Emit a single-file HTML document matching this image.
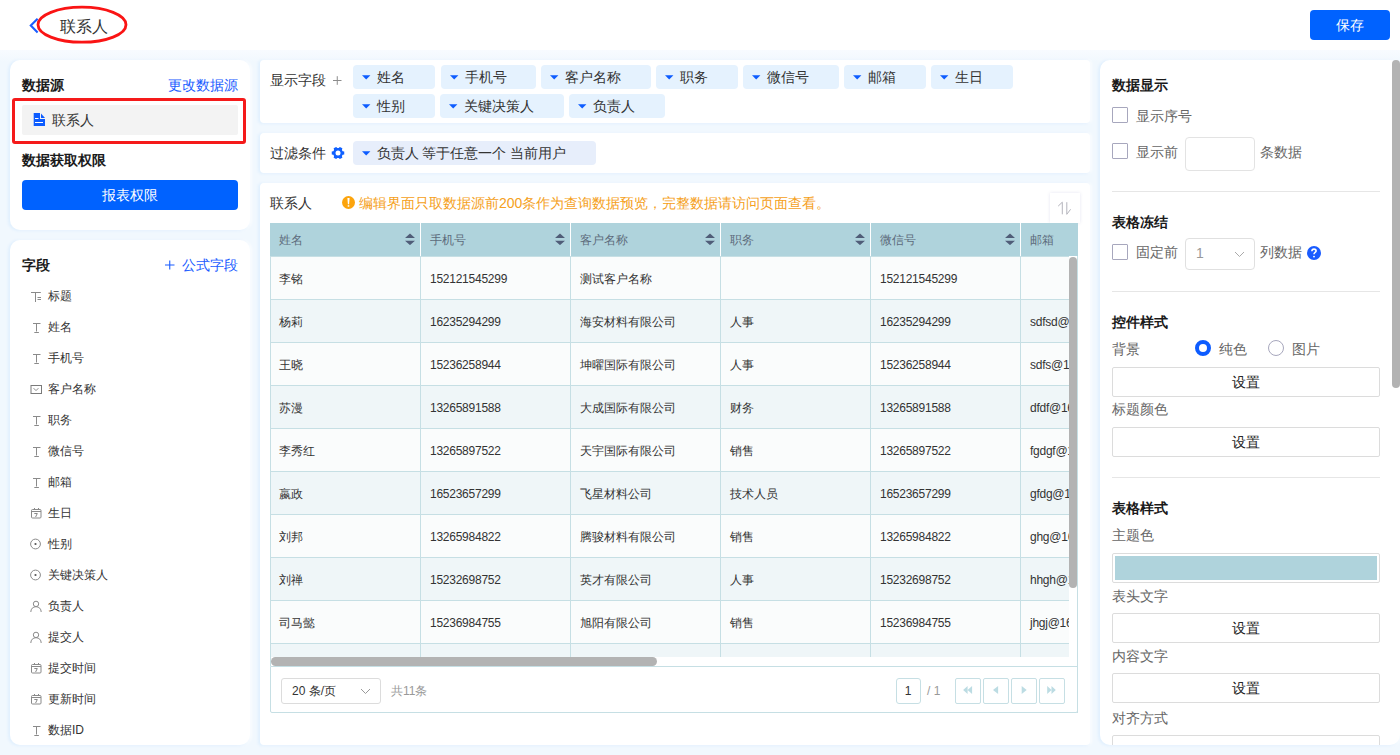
<!DOCTYPE html>
<html><head><meta charset="utf-8">
<style>
*{box-sizing:border-box;margin:0;padding:0}
html,body{width:1400px;height:755px;overflow:hidden}
body{font-family:"Liberation Sans",sans-serif;background:#f1f8fe;position:relative;color:#333;font-size:14px}
.a{position:absolute;white-space:nowrap}
.t14{font-size:14px;line-height:20px;height:20px}
.t12{font-size:12px;line-height:16px;height:16px}
.panel{position:absolute;background:#fff;border-radius:10px;box-shadow:-1.5px 0.5px 3px rgba(0,130,255,.065),2px 0 3px rgba(255,255,255,.7)}
.b{font-weight:bold;color:#1a1a1a}
.blue{color:#1a5cff}
.g6{color:#666}
.btn{position:absolute;background:#0062ff;color:#fff;border-radius:4px;text-align:center}
.chip{position:absolute;height:23.5px;background:#e5f2fe;border-radius:4px}
.chip svg{position:absolute;left:8.5px;top:9.6px}
.chip span{position:absolute;left:23.5px;top:1.5px;font-size:14px;line-height:20px;color:#333}
.fld{position:absolute;left:48px;font-size:12px;line-height:16px;color:#333}
.fic{position:absolute;left:30px}
.tbl{position:absolute;left:270px;top:223px;width:799px;height:434px;overflow:hidden}
.th{position:absolute;top:0;height:33px;background:#afd3dc}
.th span{position:absolute;left:9px;top:9px;font-size:12px;line-height:16px;color:#5d6b7b}
.th svg{position:absolute;right:5px;top:10px}
.tr{position:absolute;left:0;width:900px;height:43px;border-top:1px solid #c6dfe4}
.td{position:absolute;top:0;height:43px;border-left:1px solid #c6dfe4;overflow:hidden}
.td span{position:absolute;left:9px;top:14px;font-size:12px;line-height:16px;color:#333}
.td span.n{letter-spacing:-0.25px}
.sbtn{position:absolute;left:1112px;width:268px;height:30px;border:1px solid #dcdcdc;border-radius:2px;background:#fff;text-align:center;font-size:14px;line-height:28px;color:#222}
.cb{position:absolute;left:1112px;width:16px;height:16px;border:1px solid #a7a7bd;border-radius:1px;background:#fff}
.sep{position:absolute;left:1112px;width:268px;height:1px;background:#e6e6e6}
.pbtn{position:absolute;top:678px;width:25.5px;height:25.5px;border:1px solid #c6dfe4;border-radius:2px;background:#fff}
.pbtn svg{position:absolute;left:6px;top:7px;overflow:visible}
</style></head><body>

<div class="a" style="left:0;top:0;width:1400px;height:50px;background:#fff"></div>
<div class="a" style="left:0;top:50px;width:1400px;height:12px;background:linear-gradient(#f8fbff,#f1f8fe)"></div>
<svg class="a" style="left:28px;top:16px" width="14" height="20" viewBox="0 0 14 20"><path d="M9.6 2.8 L2.8 9.6 L9.6 16.4" fill="none" stroke="#1a5cff" stroke-width="2.1"/></svg>
<div class="a" style="left:60px;top:15px;font-size:16px;line-height:24px;color:#333">联系人</div>
<svg class="a" style="left:34px;top:4px" width="96" height="42" viewBox="0 0 96 42"><ellipse cx="48" cy="20.7" rx="44" ry="17.5" fill="none" stroke="#fa1414" stroke-width="2.8"/></svg>
<div class="btn" style="left:1310px;top:10px;width:80px;height:30px;line-height:30px;font-size:14px">保存</div>
<div class="panel" style="left:10px;top:60px;width:240px;height:170px"></div>
<div class="a t14 b" style="left:22px;top:75px">数据源</div>
<div class="a t14 blue" style="left:168px;top:75px">更改数据源</div>
<div class="a" style="left:22px;top:105px;width:216px;height:30px;background:#f3f3f3;border-radius:2px"></div>
<svg class="a" style="left:33px;top:112px" width="13" height="15" viewBox="0 0 13 15"><path d="M0.7 0.9H7V6.9H12V14.1H0.7Z" fill="#0d5cff"/><path d="M8 1.6L12 6H8Z" fill="#0d5cff"/><path d="M2 6.5H5.5M2 10.5H10" stroke="#fff" stroke-width="1.1"/></svg>
<div class="a t14" style="left:52px;top:110px;color:#333">联系人</div>
<div class="a" style="left:12px;top:98px;width:234px;height:46px;border:3px solid #f51a1a;border-radius:3px"></div>
<div class="a t14 b" style="left:22px;top:150px">数据获取权限</div>
<div class="btn" style="left:22px;top:180px;width:216px;height:30px;line-height:30px;font-size:14px">报表权限</div>
<div class="panel" style="left:10px;top:240px;width:240px;height:505px"></div>
<div class="a t14 b" style="left:22px;top:255px">字段</div>
<svg class="a" style="left:165px;top:260px" width="10" height="10" viewBox="0 0 10 10"><path d="M0 5H9.5M4.75 0.5V9.5" stroke="#1a5cff" stroke-width="1.1"/></svg>
<div class="a t14 blue" style="left:182px;top:255px">公式字段</div>
<div class="fic" style="top:289px"><svg width="12" height="12" viewBox="0 0 12 12"><path d="M1 2.5H10.8M5.5 2.5V12M7.5 7.5H11M7.5 9.5H11" stroke="#8a8a8a" stroke-width="1" fill="none"/></svg></div>
<div class="fld" style="top:287.5px">标题</div>
<div class="fic" style="top:320px"><svg width="12" height="12" viewBox="0 0 12 12"><path d="M3 2.5H10.5M6.5 2.5V10.5M4.3 11.5H8.9" stroke="#8a8a8a" stroke-width="1" fill="none"/></svg></div>
<div class="fld" style="top:318.5px">姓名</div>
<div class="fic" style="top:351px"><svg width="12" height="12" viewBox="0 0 12 12"><path d="M3 2.5H10.5M6.5 2.5V10.5M4.3 11.5H8.9" stroke="#8a8a8a" stroke-width="1" fill="none"/></svg></div>
<div class="fld" style="top:349.5px">手机号</div>
<div class="fic" style="top:382px"><svg width="12" height="12" viewBox="0 0 12 12"><rect x="1" y="2.5" width="10.5" height="8" fill="none" stroke="#7a7a7a"/><path d="M3.6 5.2L6 7.6L8.4 5.2" stroke="#8a8a8a" fill="none"/></svg></div>
<div class="fld" style="top:380.5px">客户名称</div>
<div class="fic" style="top:413px"><svg width="12" height="12" viewBox="0 0 12 12"><path d="M3 2.5H10.5M6.5 2.5V10.5M4.3 11.5H8.9" stroke="#8a8a8a" stroke-width="1" fill="none"/></svg></div>
<div class="fld" style="top:411.5px">职务</div>
<div class="fic" style="top:444px"><svg width="12" height="12" viewBox="0 0 12 12"><path d="M3 2.5H10.5M6.5 2.5V10.5M4.3 11.5H8.9" stroke="#8a8a8a" stroke-width="1" fill="none"/></svg></div>
<div class="fld" style="top:442.5px">微信号</div>
<div class="fic" style="top:475px"><svg width="12" height="12" viewBox="0 0 12 12"><path d="M3 2.5H10.5M6.5 2.5V10.5M4.3 11.5H8.9" stroke="#8a8a8a" stroke-width="1" fill="none"/></svg></div>
<div class="fld" style="top:473.5px">邮箱</div>
<div class="fic" style="top:506px"><svg width="12" height="12" viewBox="0 0 12 12"><rect x="1.5" y="2.5" width="9.5" height="8.5" rx="1" fill="none" stroke="#8a8a8a"/><path d="M1.5 4.5H11M4.5 1V3M8.5 1V3M4.3 6.5H7.3L5.6 10" stroke="#8a8a8a" fill="none"/></svg></div>
<div class="fld" style="top:504.5px">生日</div>
<div class="fic" style="top:537px"><svg width="12" height="12" viewBox="0 0 12 12"><circle cx="5.5" cy="6" r="4.9" fill="none" stroke="#8a8a8a"/><circle cx="5.5" cy="6" r="1.1" fill="#555"/></svg></div>
<div class="fld" style="top:535.5px">性别</div>
<div class="fic" style="top:568px"><svg width="12" height="12" viewBox="0 0 12 12"><circle cx="5.5" cy="6" r="4.9" fill="none" stroke="#8a8a8a"/><circle cx="5.5" cy="6" r="1.1" fill="#555"/></svg></div>
<div class="fld" style="top:566.5px">关键决策人</div>
<div class="fic" style="top:599px"><svg width="12" height="12" viewBox="0 0 12 12"><circle cx="6" cy="3.9" r="2.7" fill="none" stroke="#8a8a8a"/><path d="M0.8 12C0.8 8.8 3 6.7 6 6.7S11.2 8.8 11.2 12" fill="none" stroke="#8a8a8a"/></svg></div>
<div class="fld" style="top:597.5px">负责人</div>
<div class="fic" style="top:630px"><svg width="12" height="12" viewBox="0 0 12 12"><circle cx="6" cy="3.9" r="2.7" fill="none" stroke="#8a8a8a"/><path d="M0.8 12C0.8 8.8 3 6.7 6 6.7S11.2 8.8 11.2 12" fill="none" stroke="#8a8a8a"/></svg></div>
<div class="fld" style="top:628.5px">提交人</div>
<div class="fic" style="top:661px"><svg width="12" height="12" viewBox="0 0 12 12"><rect x="1.5" y="2.5" width="9.5" height="8.5" rx="1" fill="none" stroke="#8a8a8a"/><path d="M1.5 4.5H11M4.5 1V3M8.5 1V3M4.3 6.5H7.3L5.6 10" stroke="#8a8a8a" fill="none"/></svg></div>
<div class="fld" style="top:659.5px">提交时间</div>
<div class="fic" style="top:692px"><svg width="12" height="12" viewBox="0 0 12 12"><rect x="1.5" y="2.5" width="9.5" height="8.5" rx="1" fill="none" stroke="#8a8a8a"/><path d="M1.5 4.5H11M4.5 1V3M8.5 1V3M4.3 6.5H7.3L5.6 10" stroke="#8a8a8a" fill="none"/></svg></div>
<div class="fld" style="top:690.5px">更新时间</div>
<div class="fic" style="top:723px"><svg width="12" height="12" viewBox="0 0 12 12"><path d="M3 2.5H10.5M6.5 2.5V10.5M4.3 11.5H8.9" stroke="#8a8a8a" stroke-width="1" fill="none"/></svg></div>
<div class="fld" style="top:721.5px">数据ID</div>
<div class="panel" style="left:260px;top:60px;width:830px;height:63px;border-radius:4px"></div>
<div class="a t14" style="left:270px;top:70px;color:#333">显示字段</div>
<svg class="a" style="left:333px;top:75.5px" width="9" height="9" viewBox="0 0 9 9"><path d="M0 4.5H8.5M4.25 0.2V8.8" stroke="#8c8c8c" stroke-width="1"/></svg>
<div class="chip" style="left:353px;top:65px;width:82px"><svg width="9" height="6" viewBox="0 0 9 6"><path d="M0 0.2H8.4L4.2 4.6Z" fill="#0d5cff"/></svg><span>姓名</span></div>
<div class="chip" style="left:441px;top:65px;width:95px"><svg width="9" height="6" viewBox="0 0 9 6"><path d="M0 0.2H8.4L4.2 4.6Z" fill="#0d5cff"/></svg><span>手机号</span></div>
<div class="chip" style="left:541px;top:65px;width:110px"><svg width="9" height="6" viewBox="0 0 9 6"><path d="M0 0.2H8.4L4.2 4.6Z" fill="#0d5cff"/></svg><span>客户名称</span></div>
<div class="chip" style="left:656px;top:65px;width:82px"><svg width="9" height="6" viewBox="0 0 9 6"><path d="M0 0.2H8.4L4.2 4.6Z" fill="#0d5cff"/></svg><span>职务</span></div>
<div class="chip" style="left:743px;top:65px;width:96px"><svg width="9" height="6" viewBox="0 0 9 6"><path d="M0 0.2H8.4L4.2 4.6Z" fill="#0d5cff"/></svg><span>微信号</span></div>
<div class="chip" style="left:844px;top:65px;width:82px"><svg width="9" height="6" viewBox="0 0 9 6"><path d="M0 0.2H8.4L4.2 4.6Z" fill="#0d5cff"/></svg><span>邮箱</span></div>
<div class="chip" style="left:931px;top:65px;width:82px"><svg width="9" height="6" viewBox="0 0 9 6"><path d="M0 0.2H8.4L4.2 4.6Z" fill="#0d5cff"/></svg><span>生日</span></div>
<div class="chip" style="left:353px;top:94px;width:82px"><svg width="9" height="6" viewBox="0 0 9 6"><path d="M0 0.2H8.4L4.2 4.6Z" fill="#0d5cff"/></svg><span>性别</span></div>
<div class="chip" style="left:440px;top:94px;width:124px"><svg width="9" height="6" viewBox="0 0 9 6"><path d="M0 0.2H8.4L4.2 4.6Z" fill="#0d5cff"/></svg><span>关键决策人</span></div>
<div class="chip" style="left:569px;top:94px;width:96px"><svg width="9" height="6" viewBox="0 0 9 6"><path d="M0 0.2H8.4L4.2 4.6Z" fill="#0d5cff"/></svg><span>负责人</span></div>
<div class="panel" style="left:260px;top:133px;width:830px;height:40px;border-radius:4px"></div>
<div class="a t14" style="left:270px;top:143px;color:#333">过滤条件</div>
<svg class="a" style="left:330.5px;top:146.2px" width="14" height="14" viewBox="0 0 14 14"><path d="M11.64 5.13 L13.24 5.56 L13.24 8.44 L11.64 8.87 L10.94 10.08 L11.36 11.68 L8.87 13.12 L7.70 11.95 L6.30 11.95 L5.13 13.12 L2.64 11.68 L3.06 10.08 L2.36 8.87 L0.76 8.44 L0.76 5.56 L2.36 5.13 L3.06 3.92 L2.64 2.32 L5.13 0.88 L6.30 2.05 L7.70 2.05 L8.87 0.88 L11.36 2.32 L10.94 3.92Z" fill="#1060ff"/><circle cx="7" cy="7" r="2.5" fill="#fff"/></svg>
<div class="chip" style="left:353px;top:141px;width:243px;background:#e7eefb"><svg width="9" height="6" viewBox="0 0 9 6"><path d="M0 0.2H8.4L4.2 4.6Z" fill="#0d5cff"/></svg><span>负责人 等于任意一个 当前用户</span></div>
<div class="panel" style="left:260px;top:183px;width:830px;height:562px;border-radius:4px"></div>
<div class="a t14" style="left:270px;top:193px;color:#333">联系人</div>
<svg class="a" style="left:342px;top:196px" width="13" height="13" viewBox="0 0 13 13"><circle cx="6.5" cy="6.5" r="6.5" fill="#fca40c"/><path d="M5.4 2H7.6L7.1 8.3H5.9Z" fill="#fff"/><rect x="5.7" y="9.2" width="1.6" height="1.5" fill="#fff"/></svg>
<div class="a t14" style="left:359px;top:193px;color:#f5a020">编辑界面只取数据源前200条作为查询数据预览，完整数据请访问页面查看。</div>
<div class="a" style="left:1050px;top:193px;width:30px;height:30px;background:#fff;box-shadow:0 0 3px rgba(150,150,200,.25)"></div>
<svg class="a" style="left:1057px;top:201px" width="15" height="14" viewBox="0 0 15 14"><path d="M1.2 5.1L5.3 1.2V13.3M9.8 1.2V13.3L13.6 8.3" fill="none" stroke="#b4b4bc" stroke-width="1"/></svg>
<div class="tbl">
<div class="th" style="left:0px;width:150px;"><span>姓名</span><svg width="10" height="12" viewBox="0 0 10 12"><path d="M0 4.9L5 0.4L10 4.9Z M0 7.8L10 7.8L5 12.1Z" fill="#505d78"/></svg></div>
<div class="th" style="left:150px;width:150px;border-left:1px solid #fff"><span>手机号</span><svg width="10" height="12" viewBox="0 0 10 12"><path d="M0 4.9L5 0.4L10 4.9Z M0 7.8L10 7.8L5 12.1Z" fill="#505d78"/></svg></div>
<div class="th" style="left:300px;width:150px;border-left:1px solid #fff"><span>客户名称</span><svg width="10" height="12" viewBox="0 0 10 12"><path d="M0 4.9L5 0.4L10 4.9Z M0 7.8L10 7.8L5 12.1Z" fill="#505d78"/></svg></div>
<div class="th" style="left:450px;width:150px;border-left:1px solid #fff"><span>职务</span><svg width="10" height="12" viewBox="0 0 10 12"><path d="M0 4.9L5 0.4L10 4.9Z M0 7.8L10 7.8L5 12.1Z" fill="#505d78"/></svg></div>
<div class="th" style="left:600px;width:150px;border-left:1px solid #fff"><span>微信号</span><svg width="10" height="12" viewBox="0 0 10 12"><path d="M0 4.9L5 0.4L10 4.9Z M0 7.8L10 7.8L5 12.1Z" fill="#505d78"/></svg></div>
<div class="th" style="left:750px;width:150px;border-left:1px solid #fff"><span>邮箱</span><svg width="10" height="12" viewBox="0 0 10 12"><path d="M0 4.9L5 0.4L10 4.9Z M0 7.8L10 7.8L5 12.1Z" fill="#505d78"/></svg></div>
<div class="tr" style="top:33px;background:#fafcfc">
<div class="td" style="left:0px;width:150px;border-left:none"><span>李铭</span></div>
<div class="td" style="left:150px;width:150px;"><span class="n">152121545299</span></div>
<div class="td" style="left:300px;width:150px;"><span>测试客户名称</span></div>
<div class="td" style="left:450px;width:150px;"><span></span></div>
<div class="td" style="left:600px;width:150px;"><span class="n">152121545299</span></div>
<div class="td" style="left:750px;width:150px;"><span></span></div>
</div>
<div class="tr" style="top:76px;background:#eff6f8">
<div class="td" style="left:0px;width:150px;border-left:none"><span>杨莉</span></div>
<div class="td" style="left:150px;width:150px;"><span class="n">16235294299</span></div>
<div class="td" style="left:300px;width:150px;"><span>海安材料有限公司</span></div>
<div class="td" style="left:450px;width:150px;"><span>人事</span></div>
<div class="td" style="left:600px;width:150px;"><span class="n">16235294299</span></div>
<div class="td" style="left:750px;width:150px;"><span class="n">sdfsd@163.com</span></div>
</div>
<div class="tr" style="top:119px;background:#fafcfc">
<div class="td" style="left:0px;width:150px;border-left:none"><span>王晓</span></div>
<div class="td" style="left:150px;width:150px;"><span class="n">15236258944</span></div>
<div class="td" style="left:300px;width:150px;"><span>坤曜国际有限公司</span></div>
<div class="td" style="left:450px;width:150px;"><span>人事</span></div>
<div class="td" style="left:600px;width:150px;"><span class="n">15236258944</span></div>
<div class="td" style="left:750px;width:150px;"><span class="n">sdfs@163.com</span></div>
</div>
<div class="tr" style="top:162px;background:#eff6f8">
<div class="td" style="left:0px;width:150px;border-left:none"><span>苏漫</span></div>
<div class="td" style="left:150px;width:150px;"><span class="n">13265891588</span></div>
<div class="td" style="left:300px;width:150px;"><span>大成国际有限公司</span></div>
<div class="td" style="left:450px;width:150px;"><span>财务</span></div>
<div class="td" style="left:600px;width:150px;"><span class="n">13265891588</span></div>
<div class="td" style="left:750px;width:150px;"><span class="n">dfdf@163.com</span></div>
</div>
<div class="tr" style="top:205px;background:#fafcfc">
<div class="td" style="left:0px;width:150px;border-left:none"><span>李秀红</span></div>
<div class="td" style="left:150px;width:150px;"><span class="n">13265897522</span></div>
<div class="td" style="left:300px;width:150px;"><span>天宇国际有限公司</span></div>
<div class="td" style="left:450px;width:150px;"><span>销售</span></div>
<div class="td" style="left:600px;width:150px;"><span class="n">13265897522</span></div>
<div class="td" style="left:750px;width:150px;"><span class="n">fgdgf@163.com</span></div>
</div>
<div class="tr" style="top:248px;background:#eff6f8">
<div class="td" style="left:0px;width:150px;border-left:none"><span>嬴政</span></div>
<div class="td" style="left:150px;width:150px;"><span class="n">16523657299</span></div>
<div class="td" style="left:300px;width:150px;"><span>飞星材料公司</span></div>
<div class="td" style="left:450px;width:150px;"><span>技术人员</span></div>
<div class="td" style="left:600px;width:150px;"><span class="n">16523657299</span></div>
<div class="td" style="left:750px;width:150px;"><span class="n">gfdg@163.com</span></div>
</div>
<div class="tr" style="top:291px;background:#fafcfc">
<div class="td" style="left:0px;width:150px;border-left:none"><span>刘邦</span></div>
<div class="td" style="left:150px;width:150px;"><span class="n">13265984822</span></div>
<div class="td" style="left:300px;width:150px;"><span>腾骏材料有限公司</span></div>
<div class="td" style="left:450px;width:150px;"><span>销售</span></div>
<div class="td" style="left:600px;width:150px;"><span class="n">13265984822</span></div>
<div class="td" style="left:750px;width:150px;"><span class="n">ghg@163.com</span></div>
</div>
<div class="tr" style="top:334px;background:#eff6f8">
<div class="td" style="left:0px;width:150px;border-left:none"><span>刘禅</span></div>
<div class="td" style="left:150px;width:150px;"><span class="n">15232698752</span></div>
<div class="td" style="left:300px;width:150px;"><span>英才有限公司</span></div>
<div class="td" style="left:450px;width:150px;"><span>人事</span></div>
<div class="td" style="left:600px;width:150px;"><span class="n">15232698752</span></div>
<div class="td" style="left:750px;width:150px;"><span class="n">hhgh@163.com</span></div>
</div>
<div class="tr" style="top:377px;background:#fafcfc">
<div class="td" style="left:0px;width:150px;border-left:none"><span>司马懿</span></div>
<div class="td" style="left:150px;width:150px;"><span class="n">15236984755</span></div>
<div class="td" style="left:300px;width:150px;"><span>旭阳有限公司</span></div>
<div class="td" style="left:450px;width:150px;"><span>销售</span></div>
<div class="td" style="left:600px;width:150px;"><span class="n">15236984755</span></div>
<div class="td" style="left:750px;width:150px;"><span class="n">jhgj@163.com</span></div>
</div>
<div class="tr" style="top:420px;background:#eff6f8">
<div class="td" style="left:0px;width:150px;border-left:none"><span></span></div>
<div class="td" style="left:150px;width:150px;"><span></span></div>
<div class="td" style="left:300px;width:150px;"><span></span></div>
<div class="td" style="left:450px;width:150px;"><span></span></div>
<div class="td" style="left:600px;width:150px;"><span></span></div>
<div class="td" style="left:750px;width:150px;"><span></span></div>
</div>
</div>
<div class="a" style="left:270px;top:256px;width:1px;height:410px;background:#c6dfe4"></div>
<div class="a" style="left:1069px;top:223px;width:9px;height:33px;background:#afd3dc"></div>
<div class="a" style="left:1077px;top:256px;width:1px;height:457px;background:#c6dfe4"></div>
<div class="a" style="left:1069px;top:257px;width:8px;height:331px;background:#b3b3b3;border-radius:4px"></div>
<div class="a" style="left:271px;top:657px;width:386px;height:9px;background:#b3b3b3;border-radius:4.5px"></div>
<div class="a" style="left:270px;top:666px;width:808px;height:47px;border:1px solid #c6dfe4;border-radius:0 0 2px 2px"></div>
<div class="a" style="left:281px;top:678px;width:100px;height:26px;border:1px solid #dcdcdc;border-radius:3px"></div>
<div class="a t12" style="left:292px;top:683px;color:#333">20 条/页</div>
<svg class="a" style="left:360px;top:688px" width="11" height="7" viewBox="0 0 11 7"><path d="M1 1L5.5 5.5L10 1" fill="none" stroke="#999" stroke-width="1"/></svg>
<div class="a t12" style="left:391px;top:683px;color:#999">共11条</div>
<div class="a" style="left:895.5px;top:678px;width:25px;height:25.5px;border:1px solid #c6dfe4;border-radius:3px"></div>
<div class="a t12" style="left:895.5px;width:25px;text-align:center;top:683px;color:#333">1</div>
<div class="a t12" style="left:927px;top:683px;color:#999">/ 1</div>
<div class="pbtn" style="left:955.2px"><svg width="12" height="12" viewBox="0 0 12 12"><path d="M5.6 0V8L1.1 4Z M10.1 0V8L5.6 4Z" fill="#bcdce3"/></svg></div>
<div class="pbtn" style="left:983.3px"><svg width="12" height="12" viewBox="0 0 12 12"><path d="M8.1 0V8L3 4Z" fill="#bcdce3"/></svg></div>
<div class="pbtn" style="left:1011.3px"><svg width="12" height="12" viewBox="0 0 12 12"><path d="M3.7 0V8L8.7 4Z" fill="#bcdce3"/></svg></div>
<div class="pbtn" style="left:1039.3px"><svg width="12" height="12" viewBox="0 0 12 12"><path d="M1.2 0V8L5.5 4Z M5.5 0V8L9.8 4Z" fill="#bcdce3"/></svg></div>
<div class="panel" style="left:1100px;top:60px;width:300px;height:685px"></div>
<div class="a" style="left:1392px;top:60px;width:8px;height:328px;background:#b3b3b3;border-radius:4px"></div>
<div class="a t14 b" style="left:1112px;top:75px">数据显示</div>
<div class="cb" style="top:107px"></div><div class="a t14 g6" style="left:1136px;top:106px">显示序号</div>
<div class="cb" style="top:143px"></div><div class="a t14 g6" style="left:1136px;top:142px">显示前</div>
<div class="a" style="left:1185px;top:137px;width:70px;height:34px;border:1px solid #e3e3e3;border-radius:4px"></div>
<div class="a t14 g6" style="left:1260px;top:142px">条数据</div>
<div class="sep" style="top:191px"></div>
<div class="a t14 b" style="left:1112px;top:212px">表格冻结</div>
<div class="cb" style="top:244px"></div><div class="a t14 g6" style="left:1136px;top:242px">固定前</div>
<div class="a" style="left:1185px;top:238px;width:70px;height:32px;border:1px solid #e0e0e0;border-radius:4px"></div>
<div class="a t14" style="left:1196px;top:243px;color:#999">1</div>
<svg class="a" style="left:1234px;top:251px" width="11" height="7" viewBox="0 0 11 7"><path d="M1 1L5.5 5.5L10 1" fill="none" stroke="#aaa" stroke-width="1"/></svg>
<div class="a t14 g6" style="left:1260px;top:242px">列数据</div>
<svg class="a" style="left:1307px;top:246px" width="14" height="14" viewBox="0 0 14 14"><circle cx="7" cy="7" r="7" fill="#1a5cff"/><path d="M4.9 5.2C4.9 3.9 5.9 3.1 7 3.1S9.1 3.8 9.1 5C9.1 6.4 7 6.5 7 8.2" fill="none" stroke="#fff" stroke-width="1.6"/><circle cx="7" cy="10.6" r="0.95" fill="#fff"/></svg>
<div class="sep" style="top:291px"></div>
<div class="a t14 b" style="left:1112px;top:312px">控件样式</div>
<div class="a t14 g6" style="left:1112px;top:339px">背景</div>
<div class="a" style="left:1195px;top:340px;width:16px;height:16px;border-radius:50%;border:4.5px solid #0d5cff;background:#fff"></div>
<div class="a t14 g6" style="left:1219px;top:339px">纯色</div>
<div class="a" style="left:1268px;top:340px;width:16px;height:16px;border-radius:50%;border:1px solid #a7a7bd;background:#fff"></div>
<div class="a t14 g6" style="left:1292px;top:339px">图片</div>
<div class="sbtn" style="top:367px">设置</div>
<div class="a t14 g6" style="left:1112px;top:399px">标题颜色</div>
<div class="sbtn" style="top:427px">设置</div>
<div class="sep" style="top:477px"></div>
<div class="a t14 b" style="left:1112px;top:498px">表格样式</div>
<div class="a t14 g6" style="left:1112px;top:525px">主题色</div>
<div class="a" style="left:1112px;top:553px;width:268px;height:30px;border:1px solid #dcdcdc;border-radius:2px;padding:2px"><div style="width:100%;height:100%;background:#afd3dc"></div></div>
<div class="a t14 g6" style="left:1112px;top:586px">表头文字</div>
<div class="sbtn" style="top:613px">设置</div>
<div class="a t14 g6" style="left:1112px;top:646px">内容文字</div>
<div class="sbtn" style="top:673px">设置</div>
<div class="a t14 g6" style="left:1112px;top:708px">对齐方式</div>
<div class="a" style="left:1100px;top:730px;width:300px;height:15px;overflow:hidden;border-radius:0 0 10px 10px"><div class="sbtn" style="top:5px;left:12px"></div></div>
</body></html>
